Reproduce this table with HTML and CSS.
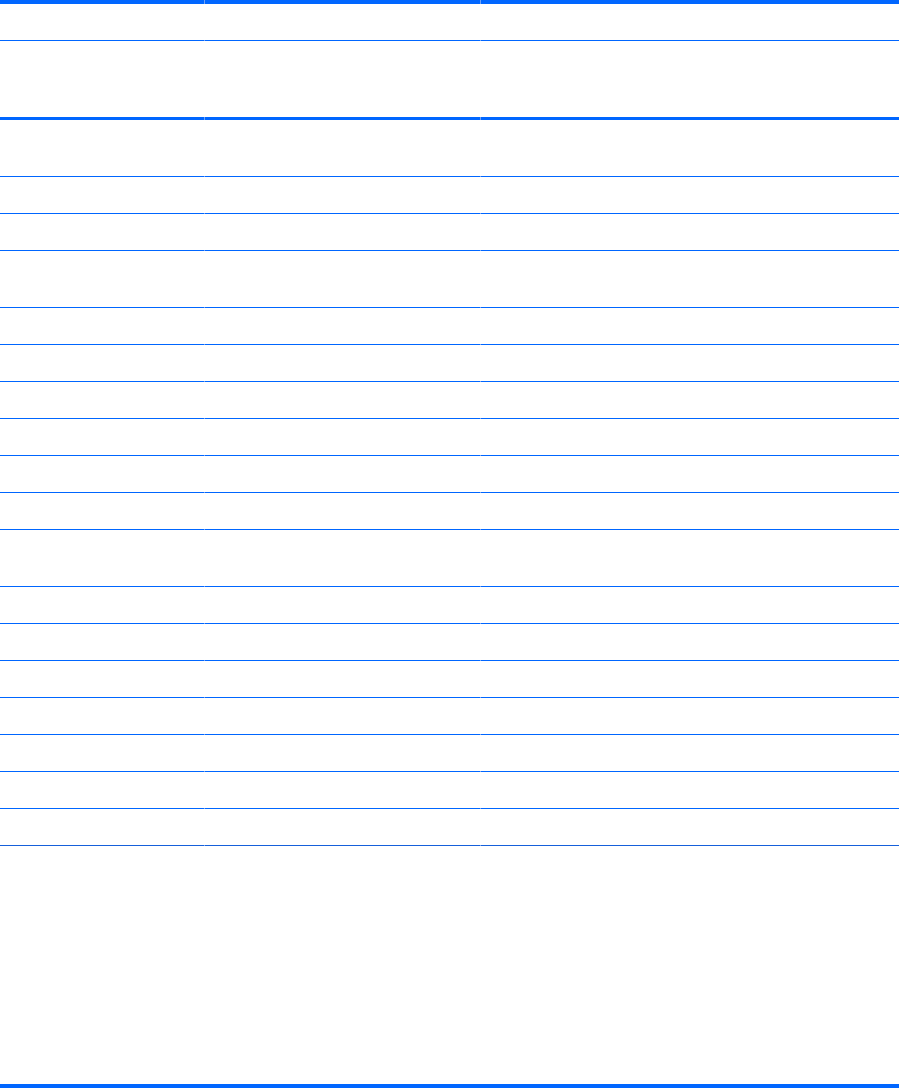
FILE: index.html
```html
<!DOCTYPE html>
<html lang="en">
<head>
    <meta charset="UTF-8">
    <meta name="viewport" content="width=device-width, initial-scale=1.0">
    <title>Table</title>
    <link rel="stylesheet" href="styles.css">
</head>
<body>

    <!-- header -->
    <div class="sheet">
        <div class="row top">
            <div class="cell"></div><div class="cell"></div><div class="cell"></div>
        </div>
        <div class="row head">
            <div class="cell"></div><div class="cell"></div><div class="cell"></div>
        </div>

        <!-- body rows -->
        <div class="row tall"><div class="cell"></div><div class="cell"></div><div class="cell"></div></div>
        <div class="row"><div class="cell"></div><div class="cell"></div><div class="cell"></div></div>
        <div class="row"><div class="cell"></div><div class="cell"></div><div class="cell"></div></div>
        <div class="row tall"><div class="cell"></div><div class="cell"></div><div class="cell"></div></div>
        <div class="row"><div class="cell"></div><div class="cell"></div><div class="cell"></div></div>
        <div class="row"><div class="cell"></div><div class="cell"></div><div class="cell"></div></div>
        <div class="row"><div class="cell"></div><div class="cell"></div><div class="cell"></div></div>
        <div class="row"><div class="cell"></div><div class="cell"></div><div class="cell"></div></div>
        <div class="row"><div class="cell"></div><div class="cell"></div><div class="cell"></div></div>
        <div class="row"><div class="cell"></div><div class="cell"></div><div class="cell"></div></div>
        <div class="row tall"><div class="cell"></div><div class="cell"></div><div class="cell"></div></div>
        <div class="row"><div class="cell"></div><div class="cell"></div><div class="cell"></div></div>
        <div class="row"><div class="cell"></div><div class="cell"></div><div class="cell"></div></div>
        <div class="row"><div class="cell"></div><div class="cell"></div><div class="cell"></div></div>
        <div class="row"><div class="cell"></div><div class="cell"></div><div class="cell"></div></div>
        <div class="row"><div class="cell"></div><div class="cell"></div><div class="cell"></div></div>
        <div class="row"><div class="cell"></div><div class="cell"></div><div class="cell"></div></div>
        <div class="row last"><div class="cell"></div><div class="cell"></div><div class="cell"></div></div>
    </div>

    <!-- footer area -->
    <div class="foot"></div>

</body>
</html>
```

FILE: styles.css
```css
/* page */
body {
    margin: 0;
    background: #fff;
    font-family: "Liberation Sans", Arial, sans-serif;
    color: #000;
}

.sheet {
    width: 899px;
}

/* each row is a 3-column grid, 1px seam between columns */
.row {
    display: grid;
    grid-template-columns: 204px 275px 418px;
    column-gap: 1px;
    background: linear-gradient(#6fa2f6, #6fa2f6) left bottom / 100% 1px no-repeat;
}

.cell {
    height: 36px;
    border-bottom: 1px solid #0066ff;
}

.row.tall .cell { height: 56px; }

/* header */
.row.top {
    background:
        linear-gradient(#6fa2f6, #6fa2f6) left top / 100% 4px no-repeat,
        linear-gradient(#6fa2f6, #6fa2f6) left bottom / 100% 1px no-repeat;
}
.row.top .cell {
    border-top: 4px solid #0066ff;
}

.row.head {
    background: linear-gradient(#6fa2f6, #6fa2f6) left bottom / 100% 3px no-repeat;
}
.row.head .cell {
    height: 76px;
    border-bottom-width: 3px;
}

.row.last .cell { border-bottom-color: #1660da; }

/* bottom rule */
.foot {
    width: 899px;
    height: 238px;
    border-bottom: 4px solid #0066ff;
}
```
